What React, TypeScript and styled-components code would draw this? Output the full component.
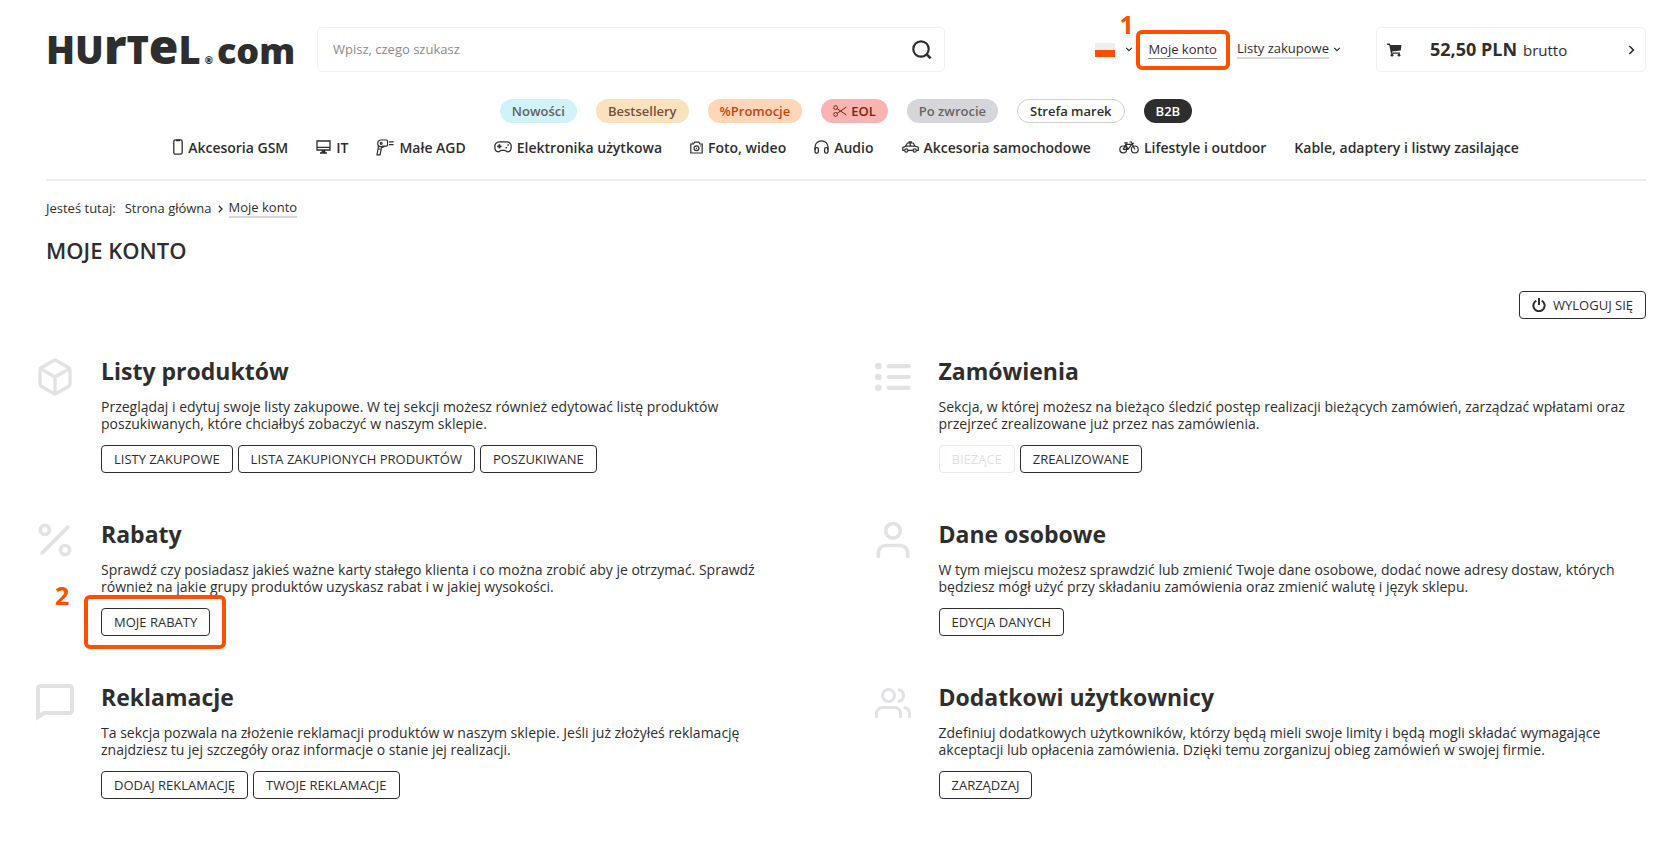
import React from 'react';
import styled, { createGlobalStyle, css } from 'styled-components';

const ink = '#2e2e2e';
const accent = '#fd4f00';
const pale = '#e2e2e5';

const GlobalStyle = createGlobalStyle`
  *, *::before, *::after { box-sizing: border-box; }
  body {
    margin: 0;
    background: #fff;
    color: ${ink};
    font-family: "Open Sans", "Noto Sans", sans-serif;
    font-size: 13px;
    line-height: 17px;
  }
  a { color: inherit; text-decoration: none; }
  button, input { font: inherit; color: inherit; }
  h1, h2, p, ul, ol { margin: 0; padding: 0; }
  li { list-style: none; }
`;

const Page = styled.div`
  padding: 27px 17px 40px 46px;
`;

const Header = styled.header`
  display: flex;
  align-items: center;
  height: 45px;
`;

const Logo = styled.a`
  display: flex;
  align-items: baseline;
  flex: 0 0 271px;
  padding-bottom: 4px;
  font-size: 38px;
  font-weight: 800;
  line-height: 45px;
`;

const TallLetter = styled.span`
  font-size: 48px;
  line-height: 45px;
`;

const Registered = styled.span`
  margin: 0 4px;
  font-size: 10px;
  line-height: 12px;
`;

const LogoSuffix = styled.span`
  font-size: 36px;
`;

const SearchForm = styled.form`
  display: flex;
  align-items: center;
  flex: 0 1 628px;
  height: 45px;
  margin-right: auto;
  padding: 0 12px 0 15px;
  border: 1px solid #f1f1f2;
  border-radius: 5px;
`;

const SearchInput = styled.input`
  flex: 1;
  min-width: 0;
  padding: 0;
  border: 0;
  outline: 0;
  background: none;
  &::placeholder { color: #8a8a8a; opacity: 1; }
`;

const PlainButton = styled.button`
  display: flex;
  align-items: center;
  padding: 0;
  border: 0;
  background: none;
  cursor: pointer;
`;

const AccountTools = styled.div`
  display: flex;
  align-items: center;
  margin: 0 35px 0 24px;
  white-space: nowrap;
`;

const LanguageButton = styled(PlainButton)`
  gap: 10px;
`;

const Flag = styled.span`
  width: 20px;
  height: 14px;
  background: linear-gradient(#eeeeee 50%, ${accent} 50%);
`;

const Highlight = styled.span<{ $pad: string }>`
  position: relative;
  display: inline-flex;
  &::after {
    content: "";
    position: absolute;
    inset: ${(p) => p.$pad};
    border: 4px solid ${accent};
    border-radius: 6px;
    pointer-events: none;
  }
`;

const StepNumber = styled.span<{ $left: number; $top: number }>`
  position: absolute;
  left: ${(p) => p.$left}px;
  top: ${(p) => p.$top}px;
  color: ${accent};
  font-size: 25px;
  font-weight: 700;
  line-height: 25px;
`;

const ToolLink = styled.a<{ $soft?: boolean }>`
  border-bottom: ${(p) => (p.$soft ? '2px solid #d8d7de' : '1px solid #8f8f8f')};
`;

const AccountSlot = styled.div`
  display: flex;
  margin: 0 20px 0 15px;
`;

const ListsSlot = styled.div`
  display: flex;
  align-items: center;
  gap: 4px;
`;

const CartBox = styled.a`
  display: flex;
  align-items: center;
  flex: 0 0 270px;
  height: 45px;
  padding: 0 10px;
  border: 1px solid #f1f1f2;
  border-radius: 5px;
`;

const CartAmount = styled.span`
  flex: 1;
  margin-left: 28px;
  font-size: 15px;
  white-space: nowrap;
`;

const Price = styled.strong`
  margin-right: 2px;
  font-size: 18px;
  font-weight: 700;
`;

const PillList = styled.ul`
  display: flex;
  flex-wrap: wrap;
  justify-content: center;
  gap: 19px;
  margin-top: 27px;
`;

const Pill = styled.a<{ $bg: string; $fg: string; $outlined?: boolean }>`
  display: flex;
  align-items: center;
  gap: 4px;
  height: 24px;
  padding: 0 12px;
  border-radius: 12px;
  background: ${(p) => p.$bg};
  color: ${(p) => p.$fg};
  font-weight: 600;
  ${(p) => p.$outlined && css`border: 1px solid #cfcfcf;`}
`;

const CategoryNav = styled.nav`
  margin-top: 14px;
  padding-bottom: 22px;
  border-bottom: 2px solid #ededed;
`;

const CategoryList = styled.ul`
  display: flex;
  flex-wrap: wrap;
  justify-content: center;
  gap: 0 28px;
`;

const Category = styled.a`
  display: flex;
  align-items: center;
  gap: 5px;
  height: 20px;
  font-size: 14px;
  font-weight: 600;
  white-space: nowrap;
  svg { flex: none; }
`;

const Breadcrumbs = styled.nav`
  display: flex;
  align-items: center;
  gap: 9px;
  margin-top: 18px;
`;

const Crumbs = styled.ol`
  display: flex;
  align-items: center;
  gap: 6px;
  li { display: flex; align-items: center; gap: 6px; }
`;

const Title = styled.h1`
  margin-top: 17px;
  font-size: 22px;
  font-weight: 600;
  line-height: 30px;
`;

const Actions = styled.div`
  display: flex;
  justify-content: flex-end;
  margin-top: 26px;
`;

const OutlineButton = styled.button`
  display: inline-flex;
  align-items: center;
  gap: 7px;
  height: 28px;
  padding: 0 12px;
  border: 1px solid ${ink};
  border-radius: 4px;
  background: #fff;
  text-transform: uppercase;
  white-space: nowrap;
  cursor: pointer;
  &:disabled {
    border-color: #e9e9eb;
    color: #dfdfe1;
    cursor: default;
  }
`;

const SectionGrid = styled.main`
  display: grid;
  grid-template-columns: repeat(2, minmax(0, 1fr));
  gap: 46px 66px;
  margin: 37px 0 0 -9px;
`;

const Section = styled.section`
  display: grid;
  grid-template-columns: 36px minmax(0, 1fr);
  column-gap: 28px;
`;

const SectionIcon = styled.div`
  display: flex;
  align-items: center;
  justify-content: center;
  height: 42px;
  color: ${pale};
  svg { flex: none; }
`;

const SectionTitle = styled.h2`
  font-size: 23px;
  font-weight: 700;
  line-height: 30px;
`;

const SectionText = styled.p`
  max-width: 700px;
  margin-top: 12px;
  font-size: 14px;
`;

const ButtonRow = styled.div`
  position: relative;
  display: flex;
  flex-wrap: wrap;
  gap: 5px;
  margin-top: 13px;
`;

type ArtProps = { w: number; h: number; sw?: number; children: React.ReactNode };

const Art = ({ w, h, sw = 1.3, children }: ArtProps) => (
  <svg width={w} height={h} viewBox={`0 0 ${w} ${h}`} fill="none" stroke="currentColor" strokeWidth={sw} aria-hidden="true">
    {children}
  </svg>
);

const PhoneIcon = () => (
  <Art w={10} h={16}>
    <rect x="0.8" y="0.8" width="8.4" height="14.4" rx="1.6" />
    <path d="M3 1.4h4" strokeWidth="1.6" />
  </Art>
);

const MonitorIcon = () => (
  <Art w={15} h={14}>
    <path d="M1 1h13v9H1zM1 7.4h13M6.6 10.2 6 12.6M8.4 10.2l.6 2.4M4 13h7M7.5 10v3" />
  </Art>
);

const DryerIcon = () => (
  <Art w={18} h={17} sw={1.2}>
    <path d="M5 1h5.5l1 .8v4.6l-1 .8H6.600a3.600 3.600 0 0 1-1.600.4A3.300 3.300 0 0 1 5 1zM2.600 6.600 1 15.800h3L5.400 8.800l3-1.400M2 10h2.400M13 2.800h4.600M13 5.600h4.600" />
    <circle cx="5.200" cy="4.300" r="1" />
  </Art>
);

const GamepadIcon = () => (
  <Art w={18} h={12} sw={1.3}>
    <path d="M5.200.8h7.600a4.500 4.500 0 0 1 4.400 5c0 3-1.200 5-3.400 5-1.600 0-2-1.400-3.200-1.400H7.400c-1.200 0-1.600 1.400-3.200 1.400-2.200 0-3.400-2-3.400-5a4.500 4.500 0 0 1 4.400-5z" />
    <path d="M5.400 3.200v4.400M3.200 5.400h4.400" strokeWidth="1.700" />
    <path d="M11.600 6.800h1.500M13.400 4h1.500" strokeWidth="1.600" />
  </Art>
);

const CameraIcon = () => (
  <Art w={13} h={13} sw={1.2}>
    <path d="M.8 3h2.700l1-1.800h4.400L9.900 3h2.300v9H.8z" />
    <circle cx="6.500" cy="7.300" r="2.400" />
    <path d="M6 7.300h1M10.300 4.800h.9M2 2h1" />
  </Art>
);

const HeadphonesIcon = () => (
  <Art w={15} h={14}>
    <path d="M1 10V7a6.500 6.200 0 0 1 13 0v3" />
    <rect x="1" y="7.600" width="3.400" height="5.600" rx="1.600" />
    <rect x="10.600" y="7.600" width="3.400" height="5.600" rx="1.600" />
  </Art>
);

const CarIcon = () => (
  <Art w={17} h={12} sw={1.2}>
    <path d="M2.600 9.400H.8V6.400l2.700-1.200L5.400 2h5.800l2 3.200 3 1v3.200h-1.800M6 9.400h5M3.500 5.200h9.700M8.200.6v4.600M6.600.8h3.200" />
    <circle cx="4.300" cy="9.500" r="1.600" />
    <circle cx="12.700" cy="9.500" r="1.600" />
  </Art>
);

const BikeIcon = () => (
  <Art w={20} h={13} sw={1.2}>
    <circle cx="4.200" cy="8.400" r="3.400" />
    <circle cx="15.800" cy="8.400" r="3.400" />
    <path d="M4.200 8.400 6.800 3.400h6L9 8.400H4.200M6.800 3.400 9 8.400M15.800 8.400 12.400 1H10.400M12.800 3.400l2-1.400" />
    <path d="M5.400 1.900h3.200" strokeWidth="1.500" />
  </Art>
);

const ScissorsIcon = () => (
  <Art w={14} h={12} sw={1}>
    <circle cx="2.600" cy="2.600" r="1.900" />
    <circle cx="2.600" cy="9.400" r="1.900" />
    <path d="M4.200 3.700 13.400 10M4.200 8.300 13.400 2" />
  </Art>
);

const SearchIcon = () => (
  <Art w={20} h={20} sw={2.2}>
    <circle cx="9" cy="9" r="7.700" />
    <path d="m14 13.600 4.600 4.800" strokeWidth="2.600" />
  </Art>
);

const CartIcon = () => (
  <svg width="15" height="14" viewBox="0 0 15 14" fill="currentColor" aria-hidden="true">
    <path d="M0 .6h2.900l.5 1.400H14.400L13.800 7.600 5 8.600l.2 1H13v1.200H4L2.200 1.900H0z" />
    <circle cx="5" cy="12.200" r="1.400" />
    <circle cx="12" cy="12.200" r="1.400" />
  </svg>
);

const PowerIcon = () => (
  <Art w={14} h={14} sw={2}>
    <path d="M4.300 2.700a5.600 5.600 0 1 0 5.400 0M7 0v7" />
  </Art>
);

const ChevronDown = () => (
  <Art w={8} h={5} sw={1.2}>
    <path d="m1.200.8 2.800 2.800L6.800.8" />
  </Art>
);

const ChevronRight = ({ big }: { big?: boolean }) => (
  <svg width={big ? 7 : 5} height={big ? 10 : 8} viewBox="0 0 5 8" fill="none" stroke="currentColor" strokeWidth="1.300" aria-hidden="true">
    <path d="m.8.8 3.200 3.200L.8 7.200" />
  </svg>
);

const LineArt = ({ size, children }: { size: number; children: React.ReactNode }) => (
  <svg width={size} height={size} viewBox="0 0 24 24" fill="none" stroke="currentColor" strokeWidth="2" strokeLinecap="round" strokeLinejoin="round" aria-hidden="true">
    {children}
  </svg>
);

const icons = {
  box: (
    <LineArt size={40}>
      <path d="M21 16V8a2 2 0 0 0-1-1.730l-7-4a2 2 0 0 0-2 0l-7 4A2 2 0 0 0 3 8v8a2 2 0 0 0 1 1.730l7 4a2 2 0 0 0 2 0l7-4A2 2 0 0 0 21 16z" />
      <path d="M3.270 6.960 12 12.010l8.730-5.050M12 22.080V12" />
    </LineArt>
  ),
  list: (
    <LineArt size={42}>
      <path d="M9.600 5.800H21M9.600 12H21M9.600 18.200H21" strokeWidth="2.400" />
      <path d="M3.600 5.800h.010M3.600 12h.010M3.600 18.200h.010" strokeWidth="3.800" />
    </LineArt>
  ),
  percent: (
    <LineArt size={44}>
      <path d="M19 5 5 19" />
      <circle cx="6.500" cy="6.500" r="2.500" />
      <circle cx="17.500" cy="17.500" r="2.500" />
    </LineArt>
  ),
  user: (
    <LineArt size={44}>
      <path d="M20 21v-2a4 4 0 0 0-4-4H8a4 4 0 0 0-4 4v2" />
      <circle cx="12" cy="7" r="4" />
    </LineArt>
  ),
  bubble: (
    <svg width="38" height="38" viewBox="0 0 38 38" fill="none" stroke="currentColor" strokeWidth="4" aria-hidden="true">
      <path d="M2 33V4.500A2.500 2.500 0 0 1 4.500 2h29A2.500 2.500 0 0 1 36 4.500v22a2.500 2.500 0 0 1-2.500 2.500H8z" />
    </svg>
  ),
  users: (
    <LineArt size={36}>
      <path d="M17 21v-2a4 4 0 0 0-4-4H5a4 4 0 0 0-4 4v2M23 21v-2a4 4 0 0 0-3-3.870M16 3.130a4 4 0 0 1 0 7.750" />
      <circle cx="9" cy="7" r="4" />
    </LineArt>
  ),
};

const pills = [
  { label: 'Nowości', bg: '#cff3f8', fg: '#6a5d5d' },
  { label: 'Bestsellery', bg: '#f9e2bd', fg: '#7a4f3a' },
  { label: '%Promocje', bg: '#ffd6b8', fg: '#c8430f' },
  { label: 'EOL', bg: '#fab3b3', fg: '#7d2405', icon: <ScissorsIcon /> },
  { label: 'Po zwrocie', bg: '#d5d5da', fg: '#666' },
  { label: 'Strefa marek', bg: '#fff', fg: ink, outlined: true },
  { label: 'B2B', bg: ink, fg: '#fff' },
];

const categories = [
  { label: 'Akcesoria GSM', icon: <PhoneIcon /> },
  { label: 'IT', icon: <MonitorIcon /> },
  { label: 'Małe AGD', icon: <DryerIcon /> },
  { label: 'Elektronika użytkowa', icon: <GamepadIcon /> },
  { label: 'Foto, wideo', icon: <CameraIcon /> },
  { label: 'Audio', icon: <HeadphonesIcon /> },
  { label: 'Akcesoria samochodowe', icon: <CarIcon /> },
  { label: 'Lifestyle i outdoor', icon: <BikeIcon /> },
  { label: 'Kable, adaptery i listwy zasilające' },
];

type SectionButton = { label: string; disabled?: boolean; step?: string };

const sections: { title: string; icon: keyof typeof icons; text: string; buttons: SectionButton[] }[] = [
  {
    title: 'Listy produktów',
    icon: 'box',
    text: 'Przeglądaj i edytuj swoje listy zakupowe. W tej sekcji możesz również edytować listę produktów poszukiwanych, które chciałbyś zobaczyć w naszym sklepie.',
    buttons: [{ label: 'Listy zakupowe' }, { label: 'Lista zakupionych produktów' }, { label: 'Poszukiwane' }],
  },
  {
    title: 'Zamówienia',
    icon: 'list',
    text: 'Sekcja, w której możesz na bieżąco śledzić postęp realizacji bieżących zamówień, zarządzać wpłatami oraz przejrzeć zrealizowane już przez nas zamówienia.',
    buttons: [{ label: 'Bieżące', disabled: true }, { label: 'Zrealizowane' }],
  },
  {
    title: 'Rabaty',
    icon: 'percent',
    text: 'Sprawdź czy posiadasz jakieś ważne karty stałego klienta i co można zrobić aby je otrzymać. Sprawdź również na jakie grupy produktów uzyskasz rabat i w jakiej wysokości.',
    buttons: [{ label: 'Moje rabaty', step: '2' }],
  },
  {
    title: 'Dane osobowe',
    icon: 'user',
    text: 'W tym miejscu możesz sprawdzić lub zmienić Twoje dane osobowe, dodać nowe adresy dostaw, których będziesz mógł użyć przy składaniu zamówienia oraz zmienić walutę i język sklepu.',
    buttons: [{ label: 'Edycja danych' }],
  },
  {
    title: 'Reklamacje',
    icon: 'bubble',
    text: 'Ta sekcja pozwala na złożenie reklamacji produktów w naszym sklepie. Jeśli już złożyłeś reklamację znajdziesz tu jej szczegóły oraz informacje o stanie jej realizacji.',
    buttons: [{ label: 'Dodaj reklamację' }, { label: 'Twoje reklamacje' }],
  },
  {
    title: 'Dodatkowi użytkownicy',
    icon: 'users',
    text: 'Zdefiniuj dodatkowych użytkowników, którzy będą mieli swoje limity i będą mogli składać wymagające akceptacji lub opłacenia zamówienia. Dzięki temu zorganizuj obieg zamówień w swojej firmie.',
    buttons: [{ label: 'Zarządzaj' }],
  },
];

export default function App() {
  return (
    <>
      <GlobalStyle />
      <Page>
        <Header>
          <Logo href="#">
            HU<TallLetter>r</TallLetter>T<TallLetter>e</TallLetter>L
            <Registered>®</Registered>
            <LogoSuffix>com</LogoSuffix>
          </Logo>
          <SearchForm role="search" onSubmit={(e) => e.preventDefault()}>
            <SearchInput type="text" aria-label="Szukaj" placeholder="Wpisz, czego szukasz" />
            <PlainButton type="submit" aria-label="Szukaj">
              <SearchIcon />
            </PlainButton>
          </SearchForm>
          <AccountTools>
            <LanguageButton type="button" aria-label="Język">
              <Flag />
              <ChevronDown />
            </LanguageButton>
            <AccountSlot>
              <Highlight $pad="-11px -13px -11px -12px">
                <StepNumber $left={-29} $top={-29}>1</StepNumber>
                <ToolLink href="#">Moje konto</ToolLink>
              </Highlight>
            </AccountSlot>
            <ListsSlot>
              <ToolLink href="#" $soft>Listy zakupowe</ToolLink>
              <ChevronDown />
            </ListsSlot>
          </AccountTools>
          <CartBox href="#">
            <CartIcon />
            <CartAmount>
              <Price>52,50 PLN</Price> brutto
            </CartAmount>
            <ChevronRight big />
          </CartBox>
        </Header>

        <PillList>
          {pills.map((p) => (
            <li key={p.label}>
              <Pill href="#" $bg={p.bg} $fg={p.fg} $outlined={p.outlined}>
                {p.icon}
                {p.label}
              </Pill>
            </li>
          ))}
        </PillList>

        <CategoryNav>
          <CategoryList>
            {categories.map((c) => (
              <li key={c.label}>
                <Category href="#">
                  {c.icon}
                  {c.label}
                </Category>
              </li>
            ))}
          </CategoryList>
        </CategoryNav>

        <Breadcrumbs>
          <span>Jesteś tutaj:</span>
          <Crumbs>
            <li>
              <a href="#">Strona główna</a>
              <ChevronRight />
            </li>
            <li>
              <ToolLink href="#" $soft>Moje konto</ToolLink>
            </li>
          </Crumbs>
        </Breadcrumbs>

        <Title>MOJE KONTO</Title>

        <Actions>
          <OutlineButton type="button">
            <PowerIcon />
            Wyloguj się
          </OutlineButton>
        </Actions>

        <SectionGrid>
          {sections.map((s) => (
            <Section key={s.title}>
              <SectionIcon>{icons[s.icon]}</SectionIcon>
              <div>
                <SectionTitle>{s.title}</SectionTitle>
                <SectionText>{s.text}</SectionText>
                <ButtonRow>
                  {s.buttons.map((b) =>
                    b.step ? (
                      <Highlight key={b.label} $pad="-13px -16px -13px -17px">
                        <StepNumber $left={-46} $top={-25}>{b.step}</StepNumber>
                        <OutlineButton type="button">{b.label}</OutlineButton>
                      </Highlight>
                    ) : (
                      <OutlineButton key={b.label} type="button" disabled={b.disabled}>
                        {b.label}
                      </OutlineButton>
                    ),
                  )}
                </ButtonRow>
              </div>
            </Section>
          ))}
        </SectionGrid>
      </Page>
    </>
  );
}
